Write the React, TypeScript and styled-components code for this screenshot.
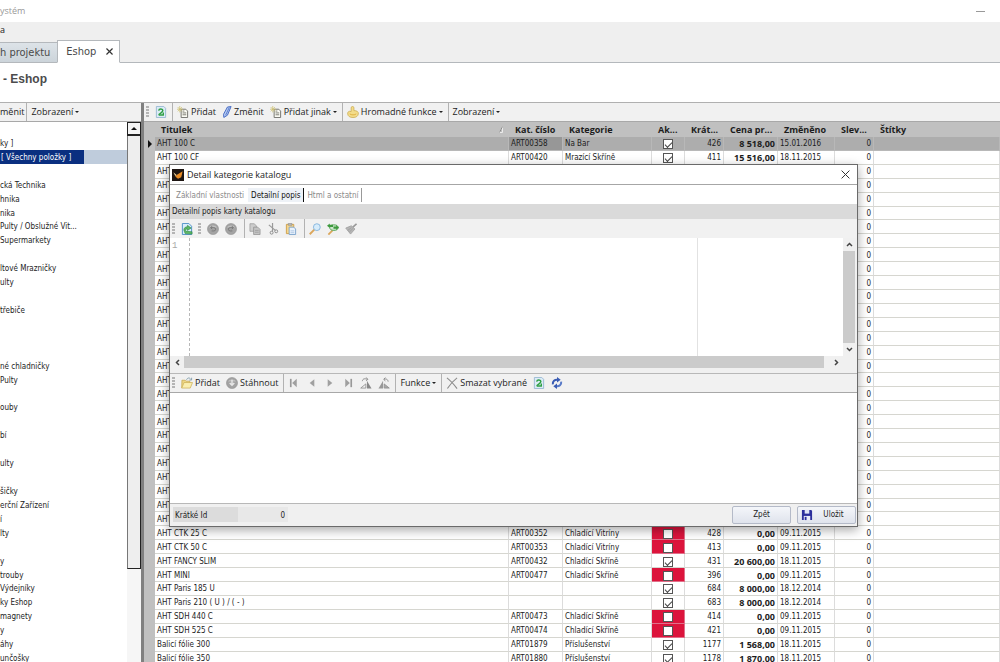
import React from 'react';
import styled, { createGlobalStyle, css } from 'styled-components';

const ui = '"Open Sans", "Noto Sans", sans-serif';
const compact = '"DejaVu Sans Condensed", "DejaVu Sans", sans-serif';

const GlobalStyle = createGlobalStyle`
  * { box-sizing: border-box; }
  body { margin: 0; background: #fff; color: #1c1c1c; font: 8px/14px ${compact}; overflow: hidden; }
  button, input, textarea { font: inherit; color: inherit; margin: 0; padding: 0; border: 0; background: none; }
  ul { margin: 0; padding: 0; list-style: none; }
`;

/* ---------- application frame ---------- */

const Page = styled.div`
  position: relative;
  display: flex;
  flex-direction: column;
  height: 100vh;
  overflow: hidden;
`;

const TitleBar = styled.header`
  display: flex;
  justify-content: space-between;
  align-items: center;
  height: 22px;
  flex: none;
  padding-right: 15px;
  color: #999;
  font-family: ${ui};
  font-size: 9px;
`;

const Minimize = styled.button`
  width: 9px;
  height: 1px;
  background: #999;
`;

const Chrome = styled.nav`
  flex: none;
  height: 41px;
  display: flex;
  flex-direction: column;
  justify-content: space-between;
  background: #efefef;
  border-bottom: 1px solid #b4b8bc;
`;

const MenuItem = styled.button`
  align-self: flex-start;
  height: 16px;
  font-family: ${ui};
  font-size: 9px;
`;

const TabStrip = styled.div`
  display: flex;
  align-items: flex-end;
  margin-bottom: -1px;
  font: 11px/20px ${compact};
  color: #4a4a4a;
`;

const PageTab = styled.button<{ $active?: boolean }>`
  display: flex;
  align-items: center;
  height: ${p => (p.$active ? 23 : 21)}px;
  border: 1px solid #b4b8bc;
  ${p =>
    p.$active
      ? css`
          padding: 0 6px 0 8px;
          gap: 10px;
          background: #fff;
          border-bottom-color: #fff;
        `
      : css`
          padding: 0 7px 0 0;
          border-width: 1px 0;
          background: linear-gradient(#dde3e8, #ccd4da);
        `}
`;

const Heading = styled.h1`
  flex: none;
  height: 39px;
  margin: 0;
  padding: 8px 3px;
  font: bold 12px/16px "Liberation Sans", Arial, sans-serif;
  color: #4c4c4c;
`;

const Workspace = styled.main`
  flex: 1;
  min-height: 0;
  display: flex;
  border-top: 1px solid #b0b0b0;
`;

/* ---------- toolbars ---------- */

const Toolbar = styled.div<{ $flush?: boolean }>`
  display: flex;
  align-items: center;
  flex: none;
  height: 19px;
  background: #f1f1f1;
  border-bottom: 1px solid #a8a8a8;
  font-family: ${ui};
  font-size: 9px;
  ${p => p.$flush && css`& > :first-child { padding: 0; }`}
`;

const Grip = styled.span`
  width: 3px;
  height: 12px;
  margin: 0 3px 0 2px;
  flex: none;
  background: repeating-linear-gradient(#b4b4b4 0 2px, transparent 2px 3px);
`;

const Divider = styled.span`
  width: 1px;
  align-self: stretch;
  margin: 0 1px 0 2px;
  background: #b2b2b2;
`;

const Tool = styled.button`
  display: flex;
  align-items: center;
  gap: 2px;
  height: 18px;
  padding: 0 3px;
  white-space: nowrap;
`;

const Caret = styled.i`
  border: 2px solid transparent;
  border-top-color: #222;
  border-bottom: 0;
`;

/* ---------- category tree ---------- */

const Side = styled.aside`
  flex: none;
  width: 144px;
  display: flex;
  flex-direction: column;
  border-right: 3px solid #808080;
`;

const TreeArea = styled.div`
  flex: 1;
  min-height: 0;
  display: flex;
`;

const Tree = styled.ul`
  flex: 1;
  display: grid;
  grid-template-rows: repeat(39, 1fr);
  height: 543px;
`;

const TreeRow = styled.li<{ $selected?: boolean }>`
  display: flex;
  white-space: nowrap;
  min-height: 0;
  background: ${p => (p.$selected ? '#bfccdc' : 'transparent')};
`;

const TreeLabel = styled.span<{ $selected?: boolean }>`
  line-height: 10px;
  padding-top: 3px;
  ${p =>
    p.$selected &&
    css`
      width: 84px;
      padding-left: 1px;
      background: #0a2f80;
      color: #fff;
    `}
`;

const TreeScroll = styled.div`
  width: 14px;
  flex: none;
  display: flex;
  flex-direction: column;
  background: #f6f6f6;
`;

const TreeScrollButton = styled.button`
  height: 14px;
  flex: none;
  display: grid;
  place-items: center;
  background: #f4f4f4;
  border: 1px solid #222;
  border-bottom-width: 2px;
`;

const TreeThumb = styled.div`
  height: 433px;
  flex: none;
  background: #eee;
  border: 1px solid #222;
  border-top: 0;
  border-left-color: #777;
`;

/* ---------- catalogue grid ---------- */

const Content = styled.section`
  flex: 1;
  min-width: 0;
  display: flex;
  flex-direction: column;
`;

const GridArea = styled.div`
  flex: 1;
  min-height: 0;
  overflow: hidden;
  background: #c0c0c0;
  padding-left: 1px;
`;

const Grid = styled.table`
  width: 100%;
  height: 544px;
  table-layout: fixed;
  border-collapse: separate;
  border-spacing: 0;
  line-height: 10px;
`;

const HeadCell = styled.th`
  height: 15px;
  padding: 0 0 0 6px;
  text-align: left;
  font: bold 9px/12px ${ui};
  white-space: nowrap;
  overflow: hidden;
  background: #c0c0c0;
`;

const HeadInner = styled.span`
  display: flex;
  align-items: center;
  justify-content: space-between;
  padding-right: 4px;
`;

const Cell = styled.td<{ $align?: string; $strong?: boolean; $alert?: boolean }>`
  height: 13px;
  padding: 2px 2px 0;
  background: #fff;
  border-right: 1px solid #dcdcdc;
  border-bottom: 1px solid #d6d6d0;
  text-align: ${p => p.$align ?? 'left'};
  white-space: nowrap;
  overflow: hidden;
  ${p => p.$strong && css`font: bold 9px/10px ${ui};`}
  ${p => p.$alert && css`background: #dc143c; border-color: #e0708a;`}
`;

const MarkerCell = styled.td`
  padding: 0 2px 0 3px;
  background: #c0c0c0;
`;

const Row = styled.tr<{ $selected?: boolean }>`
  ${p =>
    p.$selected &&
    css`
      ${Cell} { background: #adadad; border-color: #b8b8b8; }
      ${Cell}:nth-child(3) { background: #979797; }
    `}
`;

const Check = styled.input`
  appearance: none;
  display: block;
  width: 10px;
  height: 10px;
  margin: 0 auto;
  border: 1px solid #555;
  background: #fff;
  &::after {
    content: '';
    display: none;
    width: 6px;
    height: 3px;
    margin: 2px 0 0 1px;
    border: solid #444;
    border-width: 0 0 1px 1px;
    transform: rotate(-45deg);
  }
  &:checked::after { display: block; }
`;

/* ---------- detail dialog ---------- */

const Dialog = styled.section`
  position: absolute;
  left: 169px;
  top: 164px;
  width: 689px;
  height: 363px;
  display: flex;
  flex-direction: column;
  background: #f0f0f0;
  border: 1px solid #6a6a6a;
  box-shadow: 0 3px 10px rgba(0, 0, 0, 0.35);
`;

const DialogTitle = styled.header`
  display: flex;
  align-items: center;
  height: 20px;
  flex: none;
  padding: 0 4px 0 2px;
  gap: 3px;
  background: #fff;
  border-bottom: 1px solid #a6a6a6;
  font-family: ${ui};
`;

const DialogName = styled.h2`
  flex: 1;
  margin: 0;
  font-size: 9px;
  font-weight: normal;
`;

const DialogTabs = styled.div`
  display: flex;
  height: 19px;
  flex: none;
  padding: 3px 0 0 3px;
  background: #fff;
`;

const DialogTab = styled.button<{ $active?: boolean }>`
  padding: 2px 3px 0;
  height: 14px;
  line-height: 12px;
  color: ${p => (p.$active ? '#111' : '#8a8a8a')};
  border-right: 1px solid transparent;
  &:last-child { border-right-color: #999; }
  ${p => p.$active && css`background: #eef2f7; border-right-color: #111;`}
`;

const SectionTitle = styled.div`
  height: 15px;
  flex: none;
  padding: 1px 0 0 2px;
  background: #dadada;
`;

const EditorTools = styled(Toolbar)`
  border: 0;
  ${Divider} { margin-left: 4px; }
`;

const Editor = styled.div`
  display: flex;
  height: 118px;
  flex: none;
  padding-right: 2px;
`;

const Gutter = styled.div`
  width: 20px;
  padding: 1px 2px;
  background: #fff;
  color: #a8a8a8;
  font-family: "Liberation Mono", monospace;
  font-size: 9px;
  border-right: 1px dashed #b8b8b8;
`;

const Source = styled.textarea`
  flex: 1;
  resize: none;
  outline: 0;
  background: #fff;
  border-right: 1px solid #e2e2e2;
`;

const EditorMargin = styled.div`
  width: 145px;
  background: #fff;
`;

const ScrollArrow = styled.button`
  flex: none;
  width: 13px;
  height: 13px;
  display: grid;
  place-items: center;
`;

const Scroll = styled.div<{ $horizontal?: boolean }>`
  display: flex;
  flex: none;
  flex-direction: ${p => (p.$horizontal ? 'row' : 'column')};
  ${p =>
    p.$horizontal
      ? css`
          height: 18px;
          padding: 0 14px 5px 1px;
          border-bottom: 1px solid #b8b8b8;
          ${ScrollArrow}:last-child { margin-left: 6px; }
        `
      : css`width: 12px;`}
`;

const Thumb = styled.div`
  flex: 1;
  background: #cbcbcb;
`;

const Pane = styled.div`
  flex: 1;
  background: #fff;
  border-bottom: 1px solid #b8b8b8;
`;

const Footer = styled.footer`
  display: flex;
  align-items: center;
  height: 22px;
  flex: none;
  padding: 0 1px 1px 3px;
  gap: 6px;
`;

const Field = styled.label`
  display: flex;
  height: 15px;
  line-height: 15px;
  margin-right: auto;
`;

const FieldName = styled.span`
  width: 65px;
  padding: 1px 0 0 2px;
  background: #dcdcdc;
`;

const FieldValue = styled.input`
  width: 50px;
  padding: 2px 3px 0 0;
  background: #e8e8e8;
  text-align: right;
`;

const Command = styled.button<{ $icon?: boolean }>`
  display: flex;
  align-items: center;
  justify-content: center;
  gap: 10px;
  width: 59px;
  height: 18px;
  padding-right: ${p => (p.$icon ? 8 : 0)}px;
  border: 1px solid #b4bac8;
  border-radius: 2px;
  background: linear-gradient(#f4f6fa, #dfe3ec);
`;

/* ---------- icons ---------- */

const Svg = ({ children, w = 13 }: { children: React.ReactNode; w?: number }) => (
  <svg width={w - 1} height="12" viewBox={`0 0 ${w} 13`} fill="none" aria-hidden="true">{children}</svg>
);

const RefreshDoc = () => (
  <Svg>
    <path d="M1.500.5h8l2 2v10h-10z" fill="#dcebf6" stroke="#98b8d2" />
    <path d="M4 5C4.500 2.500 8.500 3 8.500 5S6 7.500 4 9.500" stroke="#2fa044" strokeWidth="1.600" />
    <path d="M4 9.800h5.500M9 7v3.200" stroke="#2fa044" strokeWidth="1.500" />
  </Svg>
);
const NewDoc = () => (
  <Svg>
    <path d="M4.500 3.500h5l2 2v7h-7z" fill="#fbfbf4" stroke="#6e6e68" />
    <path d="M6 7.500h4M6 9.500h4M6 5.500h2" stroke="#77776f" />
    <path d="M3 0v7M0 3.500h6.500M.8 1.200l4.500 4.600M5.300 1.200L.8 5.800" stroke="#cdbf6c" strokeWidth=".8" />
  </Svg>
);
const Pencil = () => (
  <Svg w={11}>
    <path d="M6 1l4-.5-4 9.500L2 12.500l-.3-3.500z" fill="#b7cdf4" stroke="#3d62c0" />
    <path d="M8 1.500L4 10" stroke="#3d62c0" strokeWidth=".8" />
  </Svg>
);
const Hand = () => (
  <Svg>
    <path d="M4.500 6V2c0-2 3-2 3 0v3c3 0 5 1 4.800 3.500-.4 2.500-2.300 4-5.800 4s-5.500-1.500-5.800-4C.6 6.500 2 5 4.500 6z" fill="#f3dc8a" stroke="#c9a94c" strokeWidth=".8" />
    <path d="M3 8.500c1.500 1.500 5.500 1.500 7 0" stroke="#dcae3d" />
  </Svg>
);
const ImportDoc = () => (
  <Svg>
    <path d="M1.500.5h7l3 3v9h-10z" fill="#d8ecfb" stroke="#4b8fc6" />
    <path d="M3 7.500C3.500 4.500 5.500 4 7 4.200V2.500L11 5.500 7 8V6.500C5.500 6.200 4 7.500 5.500 9L12 9.500v2.500L4.500 11.500z" fill="#5cb865" stroke="#27803a" strokeWidth=".6" />
  </Svg>
);
const Disc = ({ kind }: { kind: 'undo' | 'redo' | 'down' }) => (
  <Svg>
    <circle cx="6.500" cy="6.500" r="6" fill="#a3a3a3" stroke="#8e8e8e" strokeWidth=".6" />
    <path d="M2 5a5 4 0 0 1 9 0" fill="#c0c0c0" />
    {kind === 'undo' && <path d="M4 5h3.500a1.800 1.800 0 0 1 0 3.600H5M5.600 3.300L4 5l1.600 1.700" stroke="#777" />}
    {kind === 'redo' && <path d="M9 5H5.500a1.800 1.800 0 0 0 0 3.600H8M7.400 3.300L9 5 7.400 6.700" stroke="#777" />}
    {kind === 'down' && <path d="M6.500 3v5.500M4 6.500L6.500 9 9 6.500" stroke="#e8e8e8" strokeWidth="1.500" />}
  </Svg>
);
const Copy = () => (
  <Svg>
    <path d="M1 .8h4.500L8 3v6H1z" fill="#ccc" stroke="#999" strokeWidth=".8" />
    <path d="M5 4.500h4.500L12 7v5.500H5z" fill="#c4c4c4" stroke="#8e8e8e" strokeWidth=".8" />
    <path d="M6.500 8h4M6.500 10h4" stroke="#999" strokeWidth=".8" />
  </Svg>
);
const Cut = () => (
  <Svg>
    <path d="M2 2l7 6M6 0v9" stroke="#9a9a9a" strokeWidth="1.300" />
    <circle cx="5" cy="10.500" r="1.600" stroke="#888" />
    <circle cx="10" cy="9" r="1.600" stroke="#888" />
  </Svg>
);
const Paste = () => (
  <Svg>
    <path d="M1.500 1.500h8v10h-8z" fill="#f4d58c" stroke="#cf9f4a" />
    <path d="M3.500.5h4v2h-4z" fill="#bbb" stroke="#888" strokeWidth=".6" />
    <path d="M4.500 4.500h5l2 2v6h-7z" fill="#e8f1fb" stroke="#7ba3cc" />
    <path d="M6 8.500h4M6 10.500h4" stroke="#9dbbdc" strokeWidth=".8" />
  </Svg>
);
const Find = () => (
  <Svg>
    <path d="M.8 12.200L6 7" stroke="#dba65a" strokeWidth="2" />
    <circle cx="8.500" cy="4.500" r="3.700" fill="#d6ecfb" stroke="#86b4dc" />
  </Svg>
);
const Replace = () => (
  <Svg>
    <path d="M1.500 12.500L6 8" stroke="#dba65a" strokeWidth="2" />
    <ellipse cx="7.500" cy="5" rx="4.500" ry="3" fill="#cfe6cf" stroke="#55a455" />
    <path d="M0 3l3-2.500v1.300h3.500v2.400H3v1.300z" fill="#3e9a3e" />
    <path d="M13 5L10 2.500v1.300H7v2.400h3v1.300z" fill="#3e9a3e" />
  </Svg>
);
const Brush = () => (
  <Svg>
    <path d="M12.500.8L8.500 4.500" stroke="#999" strokeWidth="1.800" />
    <path d="M.8 5.500l6-2.500 4 3.500L6 12z" fill="#b5b5b5" stroke="#9b9b9b" strokeWidth=".8" />
    <path d="M3 8l4-3M4.500 10L8.500 6" stroke="#969696" strokeWidth=".7" />
  </Svg>
);
const Folder = () => (
  <Svg>
    <path d="M.8 12L1 3.500h3.500l1 1h4V7" fill="#eed684" stroke="#c4a64c" strokeWidth=".8" />
    <path d="M.8 12l2.500-6H12.500L10 12z" fill="#faeeb0" stroke="#cdb156" strokeWidth=".8" />
    <path d="M6 3c1-2.500 3.500-2.500 4.500-.5M11.500.8v2.500H9" stroke="#7896a6" strokeWidth=".9" />
  </Svg>
);
const First = () => <Svg><path d="M3 2v9" stroke="#999" strokeWidth="1.800" /><path d="M9.500 2v9L4.500 6.500z" fill="#a0a0a0" /></Svg>;
const Prev = () => <Svg><path d="M9 2.500v8L4 6.500z" fill="#a0a0a0" /></Svg>;
const Next = () => <Svg><path d="M4 2.500v8l5-4z" fill="#a0a0a0" /></Svg>;
const Last = () => <Svg><path d="M10 2v9" stroke="#999" strokeWidth="1.800" /><path d="M3.500 2v9l5-4.500z" fill="#a0a0a0" /></Svg>;
const RotateRight = () => (
  <Svg>
    <path d="M7.500 4v8.500h5z" fill="#888" /><path d="M.8 12h5.500V7.500z" stroke="#8e8e8e" strokeWidth=".9" />
    <path d="M2.500 4.500C3 1.500 5.500 1.500 8 2.500M6.800.5L8.500 2.600 6.500 4" stroke="#888" />
  </Svg>
);
const RotateLeft = () => (
  <Svg>
    <path d="M5.500 4v8.500H.5z" fill="#999" /><path d="M12.200 12H6.700V7.500z" stroke="#8e8e8e" fill="#aaa" strokeWidth=".9" />
    <path d="M11 5C10.500 2 8.500 1.800 6.500 2.500M8 .6L6.200 2.600 8 4.200" stroke="#888" />
  </Svg>
);
const Erase = () => <Svg><path d="M1 1C5 4 8.500 8 12 12.500M12 1C8 4 4.500 8 1.500 12.500" stroke="#8b8b8b" strokeWidth="1.200" /></Svg>;
const Sync = () => (
  <Svg>
    <path d="M2 8C1.500 4.500 4 2.500 7.500 3" stroke="#3a5cb4" strokeWidth="2.200" />
    <path d="M6.500 0l4 3-4 3z" fill="#3a5cb4" />
    <path d="M11 5c.5 3.500-2 5.500-5.500 5" stroke="#5a7bc8" strokeWidth="2.200" />
    <path d="M6.500 13l-4-3 4-3z" fill="#3a5cb4" />
  </Svg>
);
const Floppy = () => (
  <Svg>
    <path d="M1 1h10l1 1v10H1z" fill="#2c2f9c" />
    <path d="M4 1h5v4H4z" fill="#dfe4f6" /><path d="M3 7.500h7V12H3z" fill="#e9ecf8" /><path d="M4 8.500h2V12H4z" fill="#2c2f9c" />
  </Svg>
);
const AppLogo = () => (
  <Svg>
    <path d="M0 0h13v13H0z" fill="#1d1512" />
    <path d="M5 6.500l6.500-4L10 9l-3.500 1.500L3.500 8z" fill="#e98b24" /><path d="M1.500 3.500L5 6.500 3.500 7.500z" fill="#f6d9a0" />
  </Svg>
);
const Cross = ({ w = 9 }: { w?: number }) => (
  <svg width={w} height={w} viewBox="0 0 9 9" fill="none" aria-hidden="true"><path d="M.6.6l7.800 7.800M8.400.6L.6 8.400" stroke="#333" strokeWidth={w < 9 ? 1.500 : 1} /></svg>
);
const chevrons = { up: 'M1 5l2.500-2.500L6 5', down: 'M1 2l2.500 2.500L6 2', left: 'M5 1L2.500 3.500 5 6', right: 'M2 1l2.500 2.500L2 6' };
const Chevron = ({ to }: { to: keyof typeof chevrons }) => (
  <svg width="7" height="7" viewBox="0 0 7 7" fill="none" aria-hidden="true"><path d={chevrons[to]} stroke="#444" strokeWidth="1.500" /></svg>
);
const RowMarker = () => (
  <svg width="4" height="8" viewBox="0 0 4 8" aria-hidden="true" display="block"><path d="M0 0l4 4-4 4z" fill="#111" /></svg>
);
const SortMark = () => (
  <svg width="6" height="7" viewBox="0 0 6 7" fill="none" aria-hidden="true"><path d="M.5 6.500L3.500.5v6z" stroke="#ececec" /><path d="M.5 6.500L3.500.5" stroke="#8a8a8a" /></svg>
);

/* ---------- data ---------- */

const tree = [
  '', 'ky ]', '[ Všechny položky ]', '', 'cká Technika', 'hnika', 'nika', 'Pulty / Obslužné Vit...', 'Supermarkety', '',
  'ltové Mrazničky', 'ulty', '', 'třebiče', '', '', '', 'né chladničky', 'Pulty', '', 'ouby', '', 'bí', '', 'ulty', '',
  'šičky', 'erční Zařízení', 'í', 'lty', '', 'y', 'trouby', 'Výdejníky', 'ky Eshop', 'magnety', 'y', 'áhy', 'unčošky',
];

type Item = { name: string; code?: string; category?: string; active?: boolean; id?: string; price?: string; changed?: string };

const covered: Item[] = Array.from({ length: 26 }, () => ({ name: 'AHT', active: true }));

const items: Item[] = [
  { name: 'AHT 100 C', code: 'ART00358', category: 'Na Bar', active: true, id: '426', price: '8 518,00', changed: '15.01.2016' },
  { name: 'AHT 100 CF', code: 'ART00420', category: 'Mrazící Skříně', active: true, id: '411', price: '15 516,00', changed: '18.11.2015' },
  ...covered,
  { name: 'AHT CTK 25 C', code: 'ART00352', category: 'Chladící Vitríny', id: '428', price: '0,00', changed: '09.11.2015' },
  { name: 'AHT CTK 50 C', code: 'ART00353', category: 'Chladící Vitríny', id: '413', price: '0,00', changed: '09.11.2015' },
  { name: 'AHT FANCY SLIM', code: 'ART00432', category: 'Chladící Skříně', active: true, id: '431', price: '20 600,00', changed: '18.11.2015' },
  { name: 'AHT MINI', code: 'ART00477', category: 'Chladící Skříně', id: '396', price: '0,00', changed: '09.11.2015' },
  { name: 'AHT Paris 185 U', active: true, id: '684', price: '8 000,00', changed: '18.12.2014' },
  { name: 'AHT Paris 210 ( U ) / ( - )', active: true, id: '683', price: '8 000,00', changed: '18.12.2014' },
  { name: 'AHT SDH 440 C', code: 'ART00473', category: 'Chladící Skříně', id: '414', price: '0,00', changed: '09.11.2015' },
  { name: 'AHT SDH 525 C', code: 'ART00474', category: 'Chladící Skříně', id: '421', price: '0,00', changed: '09.11.2015' },
  { name: 'Balicí fólie 300', code: 'ART01879', category: 'Příslušenství', active: true, id: '1177', price: '1 568,00', changed: '18.11.2015' },
  { name: 'Balicí fólie 350', code: 'ART01880', category: 'Příslušenství', active: true, id: '1178', price: '1 870,00', changed: '18.11.2015' },
];

const Columns = styled.colgroup`
  col:nth-child(1) { width: 10px; }
  col:nth-child(2) { width: 354px; }
  col:nth-child(3) { width: 54px; }
  col:nth-child(4) { width: 89px; }
  col:nth-child(5) { width: 33px; }
  col:nth-child(6) { width: 39px; }
  col:nth-child(7) { width: 54px; }
  col:nth-child(8) { width: 57px; }
  col:nth-child(9) { width: 39px; }
`;

const Catalogue = () => (
  <Grid>
    <Columns><col /><col /><col /><col /><col /><col /><col /><col /><col /><col /></Columns>
    <thead>
      <tr>
        <HeadCell aria-label="Řádek" />
        <HeadCell><HeadInner>Titulek<SortMark /></HeadInner></HeadCell>
        <HeadCell>Kat. číslo</HeadCell>
        <HeadCell>Kategorie</HeadCell>
        <HeadCell>Ak...</HeadCell>
        <HeadCell>Krát...</HeadCell>
        <HeadCell>Cena pr...</HeadCell>
        <HeadCell>Změněno</HeadCell>
        <HeadCell>Slev...</HeadCell>
        <HeadCell>Štítky</HeadCell>
      </tr>
    </thead>
    <tbody>
      {items.map((item, i) => (
        <Row key={i} $selected={i === 0}>
          <MarkerCell>{i === 0 && <RowMarker />}</MarkerCell>
          <Cell>{item.name}</Cell>
          <Cell>{item.code}</Cell>
          <Cell>{item.category}</Cell>
          <Cell $alert={!item.active}>
            <Check type="checkbox" aria-label={`Aktivní: ${item.name}`} defaultChecked={item.active} />
          </Cell>
          <Cell $align="right">{item.id}</Cell>
          <Cell $align="right" $strong>{item.price}</Cell>
          <Cell>{item.changed}</Cell>
          <Cell $align="right">0</Cell>
          <Cell />
        </Row>
      ))}
    </tbody>
  </Grid>
);

const Detail = () => (
  <Dialog role="dialog" aria-label="Detail kategorie katalogu">
    <DialogTitle>
      <AppLogo />
      <DialogName>Detail kategorie katalogu</DialogName>
      <Tool aria-label="Zavřít"><Cross /></Tool>
    </DialogTitle>
    <DialogTabs>
      <DialogTab>Základní vlastnosti</DialogTab>
      <DialogTab $active>Detailní popis</DialogTab>
      <DialogTab>Html a ostatní</DialogTab>
    </DialogTabs>
    <SectionTitle>Detailní popis karty katalogu</SectionTitle>
    <EditorTools>
      <Grip />
      <Tool aria-label="Import"><ImportDoc /></Tool>
      <Grip />
      <Tool aria-label="Zpět"><Disc kind="undo" /></Tool>
      <Tool aria-label="Znovu"><Disc kind="redo" /></Tool>
      <Divider />
      <Tool aria-label="Kopírovat"><Copy /></Tool>
      <Tool aria-label="Vyjmout"><Cut /></Tool>
      <Tool aria-label="Vložit"><Paste /></Tool>
      <Divider />
      <Tool aria-label="Najít"><Find /></Tool>
      <Tool aria-label="Nahradit"><Replace /></Tool>
      <Tool aria-label="Vyčistit"><Brush /></Tool>
    </EditorTools>
    <Editor>
      <Gutter>1</Gutter>
      <Source aria-label="Detailní popis" />
      <EditorMargin />
      <Scroll>
        <ScrollArrow aria-label="Nahoru"><Chevron to="up" /></ScrollArrow>
        <Thumb />
        <ScrollArrow aria-label="Dolů"><Chevron to="down" /></ScrollArrow>
      </Scroll>
    </Editor>
    <Scroll $horizontal>
      <ScrollArrow aria-label="Vlevo"><Chevron to="left" /></ScrollArrow>
      <Thumb />
      <ScrollArrow aria-label="Vpravo"><Chevron to="right" /></ScrollArrow>
    </Scroll>
    <Toolbar>
      <Grip />
      <Tool><Folder />Přidat</Tool>
      <Tool><Disc kind="down" />Stáhnout</Tool>
      <Divider />
      <Tool aria-label="První"><First /></Tool>
      <Tool aria-label="Předchozí"><Prev /></Tool>
      <Tool aria-label="Další"><Next /></Tool>
      <Tool aria-label="Poslední"><Last /></Tool>
      <Tool aria-label="Otočit vpravo"><RotateRight /></Tool>
      <Tool aria-label="Otočit vlevo"><RotateLeft /></Tool>
      <Divider />
      <Tool>Funkce<Caret /></Tool>
      <Divider />
      <Tool><Erase />Smazat vybrané</Tool>
      <Tool aria-label="Obnovit"><RefreshDoc /></Tool>
      <Tool aria-label="Synchronizovat"><Sync /></Tool>
    </Toolbar>
    <Pane />
    <Footer>
      <Field><FieldName>Krátké Id</FieldName><FieldValue defaultValue="0" readOnly /></Field>
      <Command>Zpět</Command>
      <Command $icon><Floppy />Uložit</Command>
    </Footer>
  </Dialog>
);

export default function App() {
  return (
    <Page>
      <GlobalStyle />
      <TitleBar>ystém<Minimize aria-label="Minimalizovat" /></TitleBar>
      <Chrome>
        <MenuItem>a</MenuItem>
        <TabStrip>
          <PageTab>h projektu</PageTab>
          <PageTab $active>Eshop<Cross w={7} /></PageTab>
        </TabStrip>
      </Chrome>
      <Heading>- Eshop</Heading>
      <Workspace>
        <Side>
          <Toolbar $flush>
            <Tool>měnit</Tool>
            <Divider />
            <Tool>Zobrazení<Caret /></Tool>
          </Toolbar>
          <TreeArea>
            <Tree>
              {tree.map((label, i) => (
                <TreeRow key={i} $selected={i === 2}><TreeLabel $selected={i === 2}>{label}</TreeLabel></TreeRow>
              ))}
            </Tree>
            <TreeScroll>
              <TreeScrollButton aria-label="Nahoru">
                <svg width="6" height="3" viewBox="0 0 6 3" aria-hidden="true"><path d="M0 3l3-3 3 3z" fill="#111" /></svg>
              </TreeScrollButton>
              <TreeThumb />
            </TreeScroll>
          </TreeArea>
        </Side>
        <Content>
          <Toolbar>
            <Grip />
            <Tool aria-label="Obnovit"><RefreshDoc /></Tool>
            <Divider />
            <Tool><NewDoc />Přidat</Tool>
            <Tool><Pencil />Změnit</Tool>
            <Tool><NewDoc />Přidat jinak<Caret /></Tool>
            <Divider />
            <Tool><Hand />Hromadné funkce<Caret /></Tool>
            <Divider />
            <Tool>Zobrazení<Caret /></Tool>
          </Toolbar>
          <GridArea><Catalogue /></GridArea>
        </Content>
      </Workspace>
      <Detail />
    </Page>
  );
}
